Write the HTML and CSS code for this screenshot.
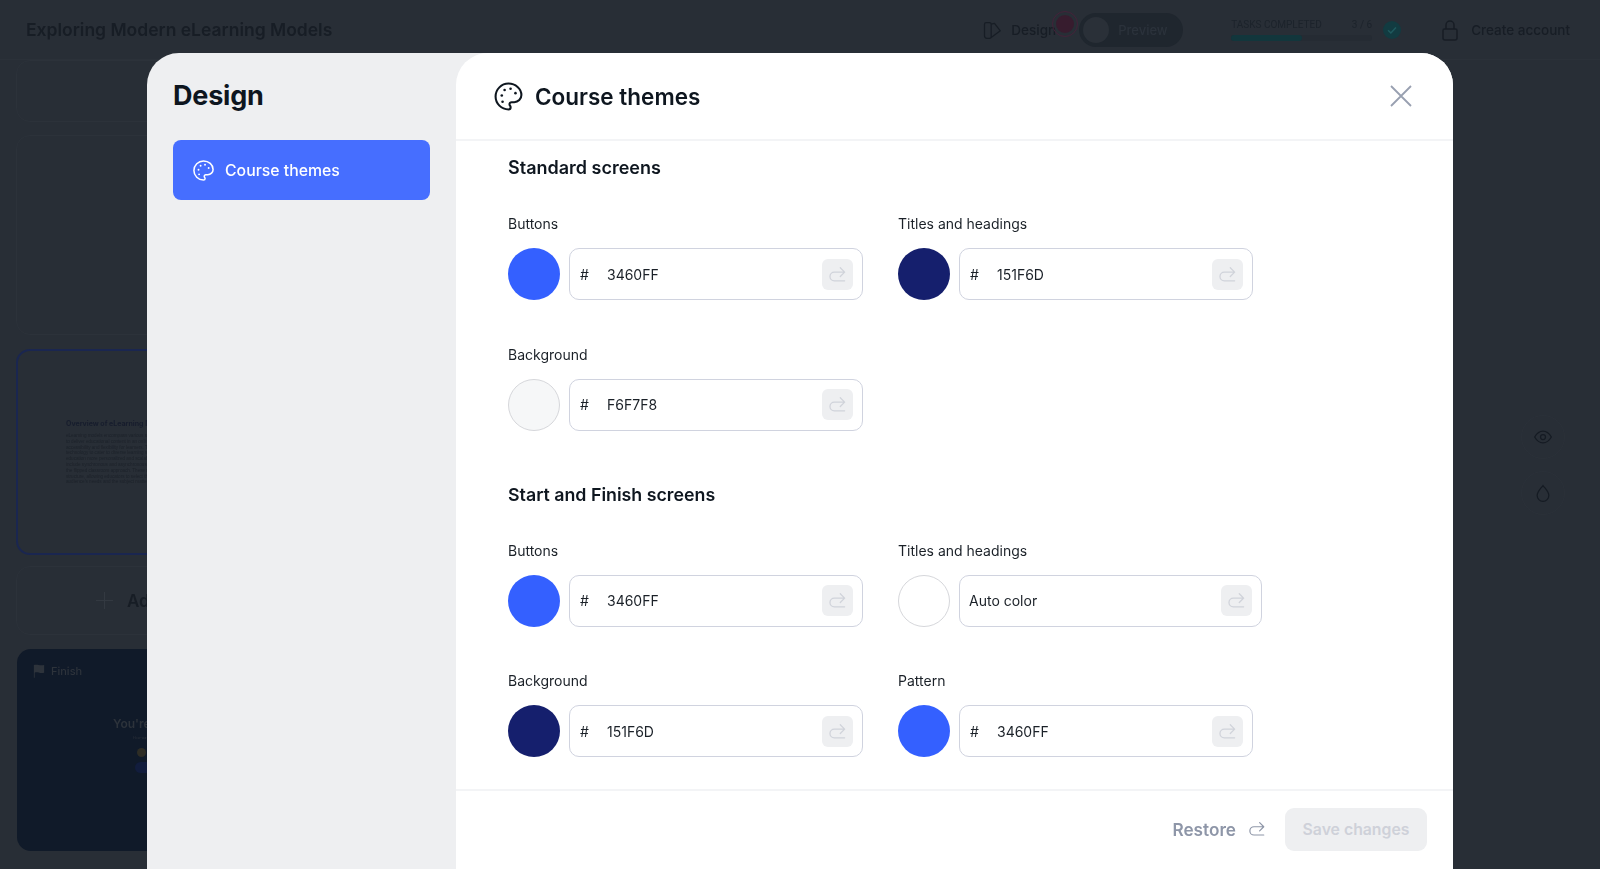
FILE: index.html
```html
<!DOCTYPE html>
<html>
<head>
    <title>Exploring Modern eLearning Models</title>
    <meta charset="UTF-8">
    <meta name="viewport" content="width=device-width, initial-scale=1.0">
    <link rel="stylesheet" href="styles.css">
</head>
<body>
    <svg class="icon-defs" width="0" height="0">
        <symbol id="palette" viewBox="0 0 24 24">
            <path d="M12 2C6.5 2 2 6.5 2 12s4.5 10 10 10c.93 0 1.65-.75 1.65-1.69 0-.44-.18-.83-.44-1.12-.29-.29-.44-.65-.44-1.13a1.64 1.64 0 0 1 1.67-1.67h2c3.05 0 5.55-2.5 5.55-5.55C21.97 6.01 17.46 2 12 2z" fill="none" stroke="currentColor" stroke-width="1.6" stroke-linejoin="round"/>
            <circle cx="6.8" cy="11.2" r="1" fill="currentColor"/>
            <circle cx="9" cy="7" r="1" fill="currentColor"/>
            <circle cx="13.6" cy="6" r="1" fill="currentColor"/>
            <circle cx="17.4" cy="9.4" r="1" fill="currentColor"/>
            <circle cx="7.4" cy="16" r="1" fill="currentColor"/>
        </symbol>
        <symbol id="redo" viewBox="0 0 24 24">
            <path d="M21 9H8a5.500 5.500 0 0 0 0 11h13M15.500 3.500 21 9l-5.500 5.500" fill="none" stroke="currentColor" stroke-width="1.600" stroke-linecap="round" stroke-linejoin="round"/>
        </symbol>
    </svg>

    <div class="page">
        <header class="topbar">
            <div class="doc-title">Exploring Modern eLearning Models</div>
            <div class="topbar-tools">
                <div class="design-tab">
                    <svg class="tool-icon" viewBox="0 0 24 24"><path d="M5 3h4a2 2 0 0 1 2 2v15a2 2 0 0 1-2 2H6a3 3 0 0 1-3-3V5a2 2 0 0 1 2-2zM11 5l4-1 7 9-11 8" fill="none" stroke="currentColor" stroke-width="1.500" stroke-linejoin="round"/></svg>
                    <span>Design</span>
                    <span class="rec-dot"></span>
                </div>
                <div class="preview-toggle">
                    <span class="toggle-knob"></span>
                    <span>Preview</span>
                </div>
                <div class="tasks">
                    <div class="tasks-text">
                        <span>TASKS COMPLETED</span>
                        <span>3 / 6</span>
                    </div>
                    <div class="tasks-bar"><div class="tasks-fill"></div></div>
                </div>
                <span class="tasks-check">
                    <svg viewBox="0 0 16 16"><path d="M4.500 8.200 7 10.700l4.500-5" fill="none" stroke="currentColor" stroke-width="1.300"/></svg>
                </span>
                <div class="account">
                    <svg class="account-icon" viewBox="0 0 24 24"><path d="M8 11V7a4 4 0 0 1 8 0v4M6.500 11h11A1.500 1.500 0 0 1 19 12.500V20a2 2 0 0 1-2 2H7a2 2 0 0 1-2-2v-7.500A1.500 1.500 0 0 1 6.500 11z" fill="none" stroke="currentColor" stroke-width="1.500"/></svg>
                    <span>Create account</span>
                </div>
            </div>
        </header>

        <div class="workspace">
            <div class="screens">
                <div class="screen-card screen-short"></div>
                <div class="screen-card screen-tall"></div>
                <div class="screen-card screen-active">
                    <div class="thumb">
                        <div class="thumb-title">Overview of eLearning Models</div>
                        <p class="thumb-text">eLearning models encompass various strategies used<br>to deliver educational content in an online format,<br>accessibility and flexibility for learners. These models<br>technology to cater to diverse learning styles and<br>education more personalized and scalable. Common<br>include synchronous and asynchronous learning,<br>the flipped classroom approach. These models vary<br>structure, allowing educators to select the model that<br>audience's needs and the subject matter at hand.</p>
                    </div>
                </div>
                <div class="screen-card screen-add">
                    <svg class="add-icon" viewBox="0 0 20 20"><path d="M10 1v18M1 10h18" stroke="currentColor" stroke-width="1"/></svg>
                    <span>Add screen</span>
                </div>
                <div class="screen-card screen-finish">
                    <div class="finish-tag">
                        <svg viewBox="0 0 14 16"><path d="M1 1c4-1.500 7 1.500 12 0v9c-5 1.500-8-1.500-11 0v6H1z" fill="currentColor"/></svg>
                        <span>Finish</span>
                    </div>
                    <div class="finish-title">You're done!</div>
                    <div class="finish-note">How was this course?</div>
                    <div class="finish-emoji"></div>
                    <div class="finish-btn"></div>
                </div>
            </div>
            <div class="side-tools">
                <span class="side-tool">
                    <svg viewBox="0 0 24 24"><path d="M2 12s4-7 10-7 10 7 10 7-4 7-10 7-10-7-10-7z" fill="none" stroke="currentColor" stroke-width="1.500"/><circle cx="12" cy="12" r="3" fill="none" stroke="currentColor" stroke-width="1.500"/></svg>
                </span>
                <span class="side-tool">
                    <svg viewBox="0 0 24 24"><path d="M12 3c3 4 7 7.500 7 12a7 7 0 0 1-14 0c0-4.500 4-8 7-12z" fill="none" stroke="currentColor" stroke-width="1.500"/></svg>
                </span>
            </div>
        </div>
    </div>

    <div class="scrim">
        <div class="modal">
            <aside class="modal-side">
                <h1>Design</h1>
                <div class="nav-item">
                    <svg class="nav-icon"><use href="#palette"/></svg>
                    <span>Course themes</span>
                </div>
            </aside>
            <section class="modal-main">
                <div class="modal-head">
                    <svg class="head-icon"><use href="#palette"/></svg>
                    <h2>Course themes</h2>
                    <svg class="close-icon" viewBox="0 0 24 24"><path d="M2 2l20 20M22 2 2 22" stroke="currentColor" stroke-width="1.800"/></svg>
                </div>
                <div class="modal-body">
                    <h3>Standard screens</h3>
                    <div class="field-grid">
                        <div class="field">
                            <label>Buttons</label>
                            <div class="field-row">
                                <span class="swatch swatch-blue"></span>
                                <div class="color-input"><span class="hash">#</span><span class="value">3460FF</span><span class="reset"><svg><use href="#redo"/></svg></span></div>
                            </div>
                        </div>
                        <div class="field">
                            <label>Titles and headings</label>
                            <div class="field-row">
                                <span class="swatch swatch-navy"></span>
                                <div class="color-input"><span class="hash">#</span><span class="value">151F6D</span><span class="reset"><svg><use href="#redo"/></svg></span></div>
                            </div>
                        </div>
                        <div class="field">
                            <label>Background</label>
                            <div class="field-row">
                                <span class="swatch swatch-light"></span>
                                <div class="color-input"><span class="hash">#</span><span class="value">F6F7F8</span><span class="reset"><svg><use href="#redo"/></svg></span></div>
                            </div>
                        </div>
                    </div>

                    <h3 class="section-next">Start and Finish screens</h3>
                    <div class="field-grid">
                        <div class="field">
                            <label>Buttons</label>
                            <div class="field-row">
                                <span class="swatch swatch-blue"></span>
                                <div class="color-input"><span class="hash">#</span><span class="value">3460FF</span><span class="reset"><svg><use href="#redo"/></svg></span></div>
                            </div>
                        </div>
                        <div class="field">
                            <label>Titles and headings</label>
                            <div class="field-row">
                                <span class="swatch swatch-white"></span>
                                <div class="color-input color-input-wide"><span class="value-auto">Auto color</span><span class="reset"><svg><use href="#redo"/></svg></span></div>
                            </div>
                        </div>
                        <div class="field">
                            <label>Background</label>
                            <div class="field-row">
                                <span class="swatch swatch-navy"></span>
                                <div class="color-input"><span class="hash">#</span><span class="value">151F6D</span><span class="reset"><svg><use href="#redo"/></svg></span></div>
                            </div>
                        </div>
                        <div class="field">
                            <label>Pattern</label>
                            <div class="field-row">
                                <span class="swatch swatch-blue"></span>
                                <div class="color-input"><span class="hash">#</span><span class="value">3460FF</span><span class="reset"><svg><use href="#redo"/></svg></span></div>
                            </div>
                        </div>
                    </div>
                </div>
                <div class="modal-foot">
                    <button class="restore-btn">Restore <svg><use href="#redo"/></svg></button>
                    <button class="save-btn">Save changes</button>
                </div>
            </section>
        </div>
    </div>
</body>
</html>
```

FILE: styles.css
```css
* {
    box-sizing: border-box;
}

html, body {
    height: 100%;
}

body {
    margin: 0;
    overflow: hidden;
    background-color: #282e36;
    color: #171d25;
    font-family: 'Inter', 'Noto Sans', sans-serif;
}

.icon-defs {
    position: absolute;
}

/* page behind the dialog */
.page {
    height: 100%;
    filter: blur(0.7px);
}

.topbar {
    height: 60px;
    display: flex;
    align-items: flex-start;
    justify-content: space-between;
    padding: 13px 30px 0 26px;
    border-bottom: 1px solid #2b3139;
}

.doc-title {
    font-size: 17.500px;
    font-weight: 600;
    line-height: 34px;
}

.topbar-tools {
    display: flex;
    align-items: center;
    height: 34px;
}

.tool-icon {
    width: 20px;
    height: 20px;
}

.design-tab {
    position: relative;
    display: flex;
    align-items: center;
    gap: 9px;
    font-size: 13.500px;
    font-weight: 500;
}

.rec-dot {
    position: absolute;
    left: 70px;
    top: -9px;
    width: 26px;
    height: 26px;
    padding: 3px;
    border-radius: 50%;
    border: 1px solid #45223a;
    background-color: #371c2e;
    background-clip: content-box;
}

.preview-toggle {
    display: flex;
    align-items: center;
    gap: 9px;
    width: 104px;
    height: 34px;
    margin-left: 23px;
    padding-left: 4px;
    border-radius: 17px;
    background-color: #1f262e;
    color: #2b323b;
    font-size: 13px;
    font-weight: 500;
}

.toggle-knob {
    width: 26px;
    height: 26px;
    border-radius: 50%;
    background-color: #2a3038;
}

.tasks {
    width: 141px;
    margin-left: 48px;
}

.tasks-text {
    display: flex;
    justify-content: space-between;
    font-size: 10px;
    line-height: 12px;
    color: #1c232b;
    font-family: 'Roboto', sans-serif;
}

.tasks-bar {
    height: 6px;
    margin-top: 4px;
    border-radius: 3px;
    background-color: #252b33;
}

.tasks-fill {
    width: 50%;
    height: 100%;
    border-radius: 3px;
    background-color: #12363c;
}

.tasks-check {
    width: 18px;
    height: 18px;
    margin-left: 11px;
    border-radius: 50%;
    background-color: #123b41;
    color: #1f5a5e;
}

.tasks-check svg {
    display: block;
    width: 18px;
    height: 18px;
}

.account {
    display: flex;
    align-items: center;
    gap: 9px;
    margin-left: 37px;
    font-size: 13.500px;
    font-weight: 500;
}

.account-icon {
    width: 24px;
    height: 24px;
}

.workspace {
    display: flex;
    justify-content: space-between;
}

.screens {
    width: 340px;
    padding-left: 16px;
}

.screen-card {
    border: 1px solid #2c323a;
    border-radius: 14px;
    margin-bottom: 14px;
}

.screen-short {
    height: 62px;
    margin-bottom: 13px;
}

.screen-tall {
    height: 200px;
}

.screen-active {
    height: 206px;
    margin-bottom: 11px;
    border: 2px solid #1a2650;
    padding: 68px 0 0 48px;
}

.thumb-title {
    font-size: 7px;
    font-weight: 700;
    line-height: 10px;
    color: #171d2d;
    white-space: nowrap;
}

.thumb-text {
    margin: 4px 0 0;
    font-size: 4.600px;
    line-height: 5.800px;
    color: #1c222a;
    font-family: 'Liberation Sans', sans-serif;
    white-space: nowrap;
}

.screen-add {
    display: flex;
    align-items: center;
    gap: 13px;
    height: 69px;
    padding-left: 78px;
    font-size: 17px;
    font-weight: 600;
}

.add-icon {
    width: 19px;
    height: 19px;
    color: #343a42;
}

.screen-finish {
    height: 202px;
    padding-top: 15px;
    border: 0;
    margin-left: 1px;
    background-color: #101a29;
    color: #2d333b;
}

.finish-tag {
    display: flex;
    align-items: center;
    gap: 6px;
    padding-left: 16px;
    font-size: 11px;
    font-weight: 500;
}

.finish-tag svg {
    width: 12px;
    height: 14px;
}

.finish-title {
    margin-top: 38px;
    padding-left: 96px;
    font-size: 12px;
    font-weight: 600;
}

.finish-note {
    margin-top: 5px;
    padding-left: 116px;
    font-size: 3.500px;
}

.finish-emoji {
    width: 9px;
    height: 9px;
    margin: 8px 0 0 120px;
    border-radius: 50%;
    background-color: #2e2d25;
}

.finish-btn {
    width: 30px;
    height: 11px;
    margin: 5px 0 0 118px;
    border-radius: 6px;
    background-color: #121d3d;
}

.side-tools {
    display: flex;
    flex-direction: column;
    gap: 12px;
    padding: 355px 35px 0 0;
}

.side-tool {
    display: block;
    width: 44px;
    height: 44px;
    padding: 11px;
    border-radius: 50%;
    border: 1px solid #2b3139;
    color: #151b23;
}

.side-tool svg {
    display: block;
    width: 20px;
    height: 20px;
}

/* dialog */
.scrim {
    position: fixed;
    inset: 0;
    padding: 53px 147px 0;
}

.modal {
    display: flex;
    height: 100%;
    border-radius: 32px 32px 0 0;
    background-color: #eeeff1;
    color: #0e161f;
}

.modal-side {
    width: 309px;
    flex-shrink: 0;
    padding: 0 26px;
}

.modal-side h1 {
    margin: 24px 0 0;
    font-size: 27px;
    line-height: 38px;
    font-weight: 700;
    letter-spacing: -0.2px;
}

.nav-item {
    display: flex;
    align-items: center;
    gap: 10px;
    height: 60px;
    margin-top: 25px;
    padding-left: 19px;
    border-radius: 8px;
    background-color: #466eff;
    color: white;
    font-size: 15.800px;
    font-weight: 500;
}

.nav-icon {
    width: 23px;
    height: 23px;
}

.modal-main {
    flex: 1;
    display: flex;
    flex-direction: column;
    min-width: 0;
    border-radius: 32px 32px 0 0;
    background-color: white;
}

.modal-head {
    display: flex;
    align-items: center;
    gap: 11px;
    height: 88px;
    flex-shrink: 0;
    padding: 0 40px 0 37px;
    border-bottom: 2px solid #f3f4f6;
}

.head-icon {
    width: 31px;
    height: 31px;
}

.modal-head h2 {
    flex: 1;
    margin: 0;
    font-size: 22.500px;
    font-weight: 600;
}

.close-icon {
    width: 24px;
    height: 24px;
    color: #98a0b0;
}

.modal-body {
    flex: 1;
    padding: 15px 0 0 52px;
    overflow: hidden;
}

.modal-body h3 {
    margin: 0 0 34px;
    font-size: 18px;
    line-height: 24px;
    font-weight: 600;
}

.modal-body h3.section-next {
    margin-top: 52px;
    font-size: 17.800px;
}

.field-grid {
    display: grid;
    grid-template-columns: 390px 390px;
    row-gap: 44.500px;
}

.field label {
    display: block;
    font-size: 14px;
    line-height: 20px;
    color: #1b2128;
    margin-bottom: 14px;
}

.field-row {
    display: flex;
    align-items: center;
    gap: 9px;
}

.swatch {
    width: 52px;
    height: 52px;
    flex-shrink: 0;
    border-radius: 50%;
}

.swatch-blue {
    background-color: #3460ff;
}

.swatch-navy {
    background-color: #151f6d;
}

.swatch-light {
    background-color: #f6f7f8;
    border: 1.500px solid #d6d7db;
}

.swatch-white {
    background-color: white;
    border: 1.500px solid #d6d7db;
}

.color-input {
    display: flex;
    align-items: center;
    width: 294px;
    height: 52px;
    padding: 0 9px 0 10px;
    border: 1.500px solid #d0d3df;
    border-radius: 10px;
    font-size: 14px;
    color: #1b2128;
}

.color-input-wide {
    width: 303px;
}

.hash {
    width: 27px;
}

.value {
    flex: 1;
}

.value-auto {
    flex: 1;
    margin-left: -1px;
}

.reset {
    width: 31px;
    height: 31px;
    padding: 6px;
    border-radius: 6px;
    background-color: #eeeff1;
    color: #d0d3da;
}

.reset svg {
    display: block;
    width: 19px;
    height: 19px;
}

.modal-foot {
    display: flex;
    align-items: center;
    justify-content: flex-end;
    gap: 19px;
    height: 80px;
    flex-shrink: 0;
    padding: 0 26px 2px 0;
    border-top: 2px solid #f3f4f6;
}

.restore-btn {
    display: flex;
    align-items: center;
    gap: 12px;
    padding: 0;
    border: none;
    background: none;
    color: #8e96a8;
    font-family: inherit;
    font-size: 17.200px;
    font-weight: 600;
}

.restore-btn svg {
    width: 18px;
    height: 18px;
}

.save-btn {
    width: 142px;
    height: 43px;
    border: none;
    border-radius: 9px;
    background-color: #eeeff1;
    color: #ced1d9;
    font-family: inherit;
    font-size: 15.800px;
    font-weight: 600;
}
```
